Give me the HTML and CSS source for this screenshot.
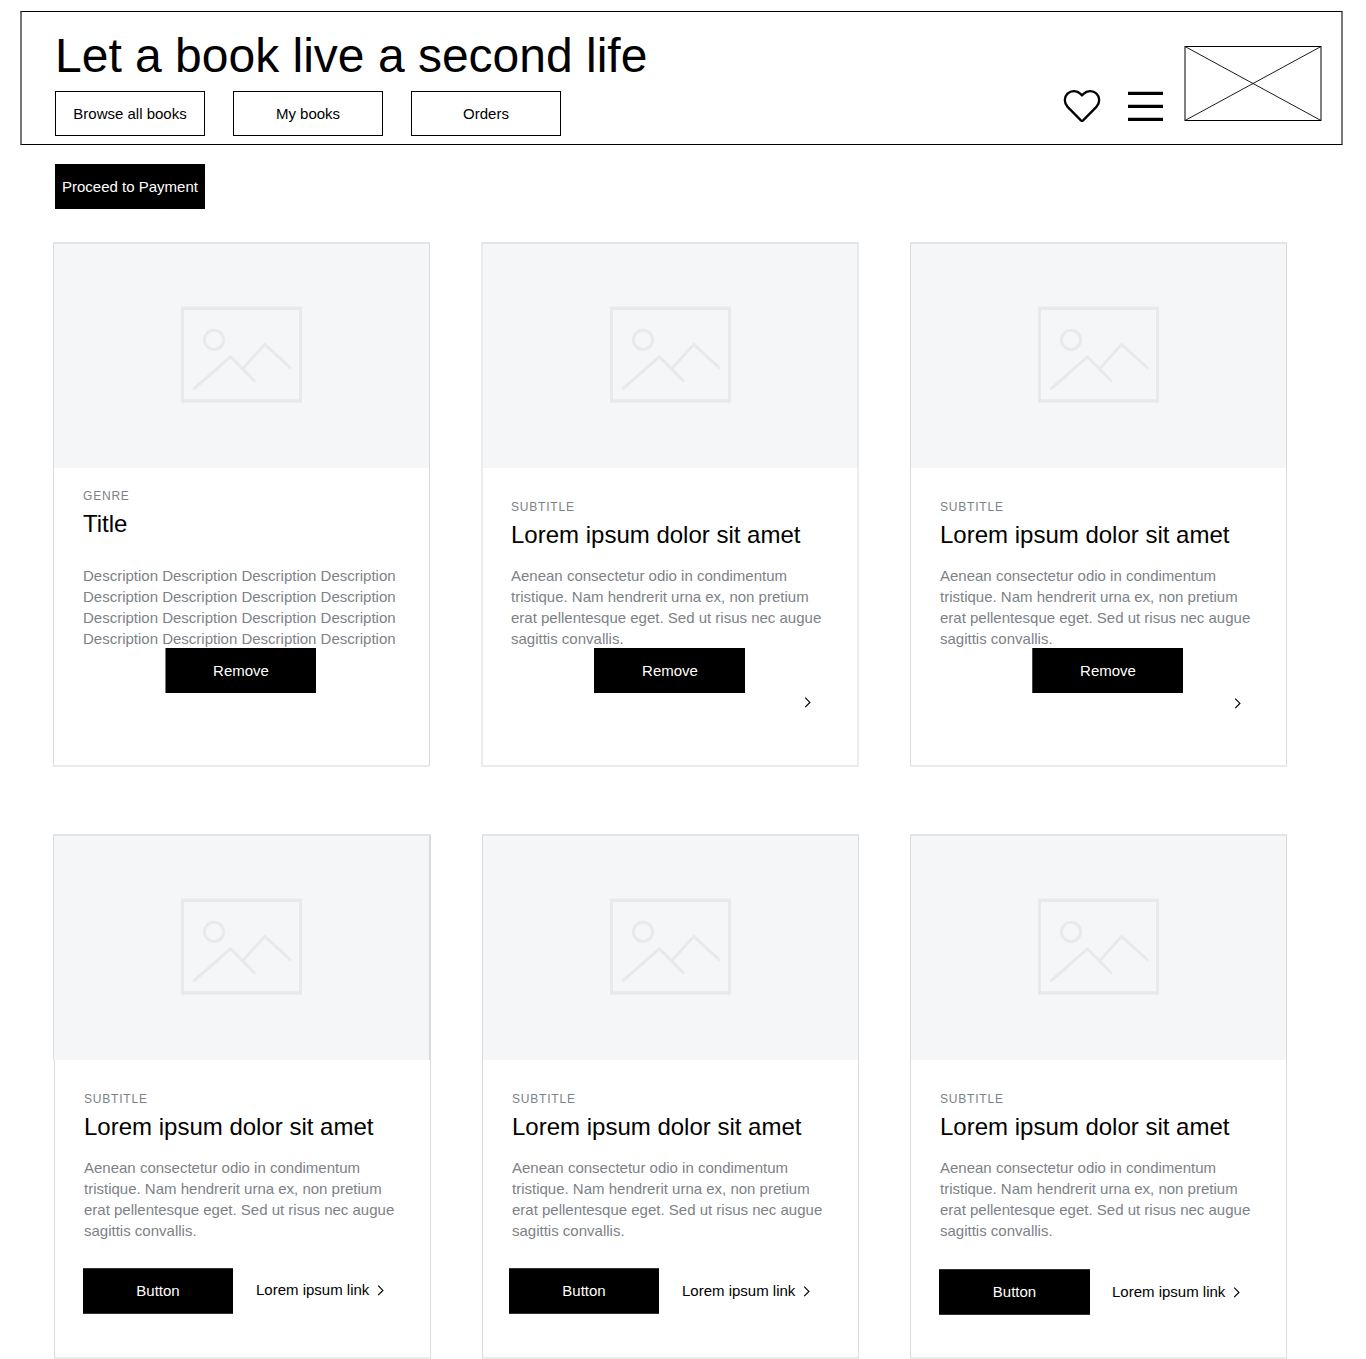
FILE: index.html
```html
<!DOCTYPE html>
<html lang="en">
<head>
<meta charset="utf-8">
<title>Let a book live a second life</title>
<link rel="stylesheet" href="styles.css">
</head>
<body>
<svg class="symbols" aria-hidden="true">
  <symbol id="picture" viewBox="0 0 121 97">
    <g fill="none" stroke="#e8e9ea" stroke-width="3" stroke-linecap="round" stroke-linejoin="round">
      <path d="M1.5 2V95M119.5 2V95"/>
      <path d="M2 2.3H119M2 95H119" stroke-width="3.6" stroke-linecap="square"/>
      <circle cx="33" cy="33.8" r="9.6"/>
      <path d="M13.3 82.5L49.5 50.7L73 74.5M62.3 62.2L83.7 38.3L109 61.5" stroke-linejoin="miter"/>
    </g>
  </symbol>
  <symbol id="chevron" viewBox="0 0 7 12">
    <path d="M1.2 1.6L5.9 6.4L1.2 11.2" fill="none" stroke="#000" stroke-width="1.2"/>
  </symbol>
</svg>

<header class="header">
  <div class="header-main">
    <h1 class="site-title">Let a book live a second life</h1>
    <nav class="nav">
      <a class="nav-item">Browse all books</a>
      <a class="nav-item">My books</a>
      <a class="nav-item">Orders</a>
    </nav>
  </div>
  <div class="header-tools">
    <svg class="heart" viewBox="0 0 38 33"><path d="M17.9 31.4L4.6 17.9C.8 13.9 1 8 4.5 4.6C8.2 1.2 14 1.4 17.5 4.9L19 6.5L20.5 4.9C24 1.4 29.8 1.2 33.5 4.6C37 8 37.2 13.9 33.4 17.9L20.1 31.4Q19 32.4 17.9 31.4Z" fill="none" stroke="#000" stroke-width="2.3" stroke-linejoin="round"/></svg>
    <svg class="menu" viewBox="0 0 35 30"><path d="M0 2.4H35M0 15.4H35M0 28.4H35" stroke="#000" stroke-width="3.2"/></svg>
    <svg class="logo" viewBox="0 0 138 75"><g fill="none" stroke="#000"><path d="M1 .5H137M1 74.5H137"/><path d="M1 0V75M137 0V75"/><path d="M1 .5L137 74.5M137 .5L1 74.5" stroke-width=".9"/></g></svg>
  </div>
</header>

<main class="main">
  <a class="btn proceed">Proceed to Payment</a>
  <div class="cards">
    <article class="card card-genre">
      <div class="media"><svg class="picture"><use href="#picture"/></svg></div>
      <div class="body">
        <div class="subtitle">GENRE</div>
        <h2 class="title">Title</h2>
        <p class="text">Description Description Description Description Description Description Description Description Description Description Description Description Description Description Description Description</p>
        <div class="actions actions-remove"><a class="btn btn-wide">Remove</a></div>
      </div>
    </article>
    <article class="card card-soft">
      <div class="media"><svg class="picture"><use href="#picture"/></svg></div>
      <div class="body">
        <div class="subtitle">SUBTITLE</div>
        <h2 class="title">Lorem ipsum dolor sit amet</h2>
        <p class="text">Aenean consectetur odio in condimentum tristique. Nam hendrerit urna ex, non pretium erat pellentesque eget. Sed ut risus nec augue sagittis convallis.</p>
        <div class="actions actions-remove"><a class="btn btn-wide">Remove</a><svg class="chevron"><use href="#chevron"/></svg></div>
      </div>
    </article>
    <article class="card card-third">
      <div class="media"><svg class="picture"><use href="#picture"/></svg></div>
      <div class="body">
        <div class="subtitle">SUBTITLE</div>
        <h2 class="title">Lorem ipsum dolor sit amet</h2>
        <p class="text">Aenean consectetur odio in condimentum tristique. Nam hendrerit urna ex, non pretium erat pellentesque eget. Sed ut risus nec augue sagittis convallis.</p>
        <div class="actions actions-remove"><a class="btn btn-wide">Remove</a><svg class="chevron"><use href="#chevron"/></svg></div>
      </div>
    </article>
    <article class="card card-shifted">
      <div class="media"><svg class="picture"><use href="#picture"/></svg></div>
      <div class="body">
        <div class="subtitle">SUBTITLE</div>
        <h2 class="title">Lorem ipsum dolor sit amet</h2>
        <p class="text">Aenean consectetur odio in condimentum tristique. Nam hendrerit urna ex, non pretium erat pellentesque eget. Sed ut risus nec augue sagittis convallis.</p>
        <div class="actions"><a class="btn btn-edged">Button</a><a class="link">Lorem ipsum link<svg class="chevron"><use href="#chevron"/></svg></a></div>
      </div>
    </article>
    <article class="card card-fifth">
      <div class="media"><svg class="picture"><use href="#picture"/></svg></div>
      <div class="body">
        <div class="subtitle">SUBTITLE</div>
        <h2 class="title">Lorem ipsum dolor sit amet</h2>
        <p class="text">Aenean consectetur odio in condimentum tristique. Nam hendrerit urna ex, non pretium erat pellentesque eget. Sed ut risus nec augue sagittis convallis.</p>
        <div class="actions"><a class="btn btn-edged">Button</a><a class="link">Lorem ipsum link<svg class="chevron"><use href="#chevron"/></svg></a></div>
      </div>
    </article>
    <article class="card card-sixth">
      <div class="media"><svg class="picture"><use href="#picture"/></svg></div>
      <div class="body">
        <div class="subtitle">SUBTITLE</div>
        <h2 class="title">Lorem ipsum dolor sit amet</h2>
        <p class="text">Aenean consectetur odio in condimentum tristique. Nam hendrerit urna ex, non pretium erat pellentesque eget. Sed ut risus nec augue sagittis convallis.</p>
        <div class="actions"><a class="btn btn-edged btn-wide">Button</a><a class="link">Lorem ipsum link<svg class="chevron"><use href="#chevron"/></svg></a></div>
      </div>
    </article>
  </div>
</main>
</body>
</html>
```
FILE: styles.css
```css
* { box-sizing: border-box; }

body {
  margin: 0;
  padding-top: 11px;
  background: #fff;
  color: #000;
  font: 15px/21px "Liberation Sans", Arial, sans-serif;
}

.symbols { display: none; }
svg { display: block; flex: none; }

.header {
  display: flex;
  justify-content: space-between;
  width: 1323px;
  height: 134px;
  margin-left: 20px;
  padding: 15px 19px 0 33px;
  border: 1px solid #000;
  border-width: 1px 2px;
  border-color: #000 #777;
}

.site-title {
  margin: 1px 0 7px;
  font-size: 48px;
  font-weight: 400;
  line-height: 56px;
}

.nav { display: flex; gap: 28px; }

.nav-item {
  width: 150px;
  height: 45px;
  border: 1px solid #000;
  line-height: 43px;
  text-align: center;
}

.header-tools { display: flex; align-items: flex-start; }
.heart { width: 38px; height: 33px; margin-top: 62px; }
.menu { width: 35px; height: 30px; margin: 64px 21px 0 27px; }
.logo { width: 138px; height: 75px; margin-top: 19px; }

.main { padding: 19px 0 0 53px; }

.btn {
  display: block;
  flex: none;
  width: 150px;
  height: 45px;
  background: #000;
  color: #fff;
  line-height: 45px;
  text-align: center;
}
.btn-wide { width: 151px; }
.btn-edged {
  height: 46px;
  border: solid #333;
  border-width: 1px 0;
  line-height: 44px;
}

.proceed { margin: 0 0 33px 2px; }

.cards {
  display: grid;
  grid-template-columns: 428px 429px 377px;
  row-gap: 67px;
}

.card { width: 377px; }

.media {
  display: flex;
  justify-content: center;
  height: 226px;
  padding-top: 62px;
  border: 1px solid #dadbdc;
  border-top: 2px solid #e4e5e5;
  border-bottom: 0;
  background: #f5f6f8;
}
.picture { width: 121px; height: 97px; }

.body {
  height: 299px;
  padding: 32px 0 0 29px;
  border: 1px solid #dadbdc;
  border-top: 0;
  border-bottom: 2px solid #ebebeb;
}

.subtitle {
  margin-bottom: 7px;
  color: #7c8287;
  font-size: 12px;
  line-height: 14px;
  letter-spacing: .8px;
}

.title {
  margin: 0 0 16px;
  font-size: 24px;
  font-weight: 400;
  line-height: 28px;
}

.text {
  width: 318px;
  margin: 0;
  color: #7c8287;
}

.actions { display: flex; margin: 27px 0 0 -3px; }
.actions-remove { margin-top: -1px; }
.actions-remove .btn { padding-left: 1px; }
.link { display: flex; margin: 12px 0 0 23px; }
.chevron { width: 7px; height: 12px; }
.link .chevron { margin: 5px 0 0 8px; }
.actions-remove .chevron { margin-top: 48px; margin-left: 59px; }

.card-genre .body { padding-top: 21px; }
.card-genre .title { margin-bottom: 27px; }
.card-genre .actions { margin-left: 82px; }
.card-genre .btn { border-left: 1px solid #777; padding-left: 0; }

.card-soft { width: 378px; }
.card-soft .media { border-left: 2px solid #e9eaeb; border-right: 2px solid #e9eaeb; }
.card-soft .body {
  padding-left: 28px;
  border-left: 2px solid #ececec;
  border-right: 2px solid #ececec;
}
.card-soft .actions { margin-left: 83px; }

.card-third .actions { margin-left: 92px; }
.card-third .btn { border-left: 1px solid #444; padding-left: 0; }
.card-third .chevron { margin-top: 49px; margin-left: 51px; }

.card-shifted { width: 378px; }
.card-shifted .media { border-right: 2px solid #dadbdc; }
.card-shifted .body { margin-left: 1px; }
.card-shifted .actions { margin-left: -1px; }
.card-shifted .link { margin-top: 11px; }

.card-fifth { margin-left: 1px; }

.card-sixth .actions { margin-top: 28px; margin-left: -1px; }
.card-sixth .link { margin-left: 22px; }
```
